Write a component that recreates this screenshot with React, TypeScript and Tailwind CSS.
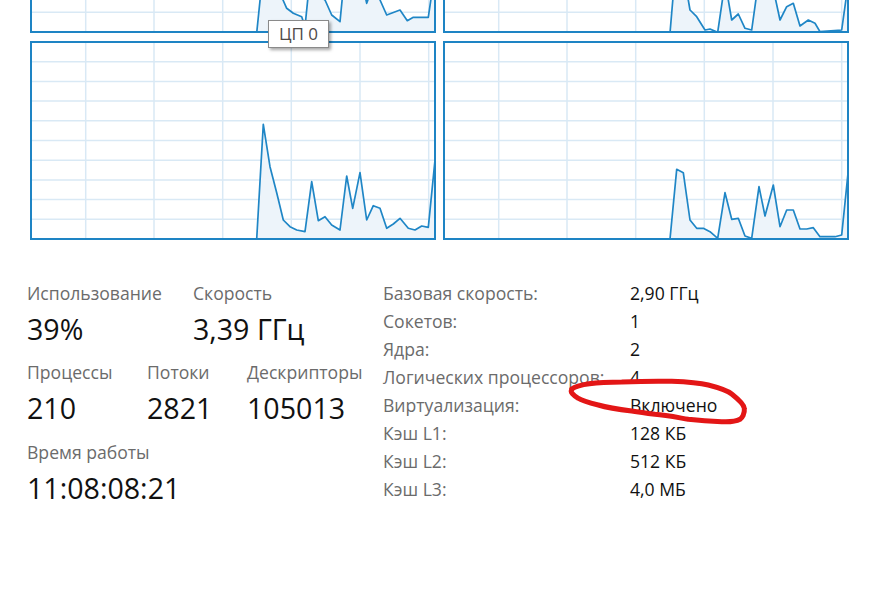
import React from 'react';

type Pt = [number, number];

// graph box geometry (outer, px)
const W = 406;
const H = 199;

const topLeft: Pt[] = [
  [0, 233], [226.7, 199], [231.7, 150], [237, 140], [243, 160], [250, 150], [253, 166],
  [256.7, 174.3], [263.3, 179.3], [271.7, 182.7], [275, 192.7], [278.3, 160], [283, 140], [289, 162], [295, 166],
  [301.7, 181], [310, 187.7], [312.7, 160], [317, 145], [323, 156], [330, 140], [336.7, 169.3], [340, 160],
  [344, 150], [350, 166], [356.7, 181], [370, 176], [377.3, 186.7], [383.3, 183.3], [398.3, 183.3], [401.7, 160], [406, 150],
];

const topRight: Pt[] = [
  [227, 199], [230.3, 160], [236, 145], [242, 160], [245.3, 166], [247, 176], [253.7, 182.7], [262, 196],
  [267, 195], [274.7, 198.3], [280.3, 160], [283, 150], [285.3, 166], [288.7, 186], [295.3, 180], [302, 194.3],
  [308.7, 196], [313.7, 160], [320, 150], [326, 158], [332.7, 166], [337, 186], [343.7, 172.7], [350.3, 169.3],
  [357, 192], [365.3, 186], [372, 189.3], [377, 197.7], [398.7, 196], [403.7, 160], [406, 150],
];

const botLeft: Pt[] = [
  [226.7, 198], [233.3, 83.3], [240, 125.7], [246.7, 151.7], [253.3, 179], [260, 185.7], [266.7, 189], [275, 190.7],
  [281.7, 140.7], [288.3, 179.7], [295, 175.7], [301.7, 184], [310, 189], [316.7, 135], [322.7, 167.3], [330, 131.7],
  [336.7, 179], [343.3, 164.7], [350, 167.3], [356.7, 187.3], [363.3, 183], [370, 177.3], [378.3, 187.3], [385, 189],
  [391.7, 185], [398.3, 186.3], [405, 119],
];

const botRight: Pt[] = [
  [227, 198], [233.7, 128.3], [240.3, 131.7], [247, 179], [253.7, 187.3], [260.3, 187.3], [267, 190.7], [274.7, 197.3],
  [282, 151.7], [288.7, 178.3], [295.3, 177.3], [302, 195], [308.7, 197.3], [316, 145.7], [322, 175], [330.3, 144],
  [337, 185.7], [343.7, 169], [350.3, 169], [357, 188], [363.7, 188], [370.3, 186.7], [377, 195.7], [385.3, 195.7],
  [392, 195.7], [398.7, 194], [405, 132.3],
];

function CpuGraph({ data, id }: { data: Pt[]; id: string }) {
  const line = data.map(([x, y]) => `${x},${y}`).join(' ');
  const first = data[0];
  const last = data[data.length - 1];
  const area = `${first[0]},${H - 1} ${line} ${last[0]},${H - 1}`;
  const vLines = [55.7, 124, 192.7, 261.3, 330, 398.7];
  const hLines = [1, 2, 3, 4, 5, 6, 7, 8, 9].map((i) => 1 + i * 19.7);

  return (
    <div className="w-[406px] h-[199px] overflow-hidden">
      <svg width={W} height={H} viewBox={`0 0 ${W} ${H}`}>
        <defs>
          <clipPath id={id}>
            <rect x={2} y={2} width={W - 4} height={H - 4} />
          </clipPath>
        </defs>
        <g clipPath={`url(#${id})`}>
          {hLines.map((y) => (
            <line key={y} x1={0} x2={W} y1={y} y2={y} stroke="#d9e9f5" strokeWidth={1.5} />
          ))}
          {vLines.map((x) => (
            <line key={x} x1={x} x2={x} y1={0} y2={H} stroke="#d9e9f5" strokeWidth={1.5} />
          ))}
          <polygon points={area} fill="#edf4fa" />
          <polyline points={line} fill="none" stroke="#1f86c6" strokeWidth={1.7} strokeLinejoin="round" />
        </g>
        <rect x={1} y={1} width={W - 2} height={H - 2} fill="none" stroke="#1e84c4" strokeWidth={2} />
      </svg>
    </div>
  );
}

const props = [
  { label: 'Базовая скорость:', value: '2,90 ГГц' },
  { label: 'Сокетов:', value: '1' },
  { label: 'Ядра:', value: '2' },
  { label: 'Логических процессоров:', value: '4' },
  { label: 'Виртуализация:', value: 'Включено' },
  { label: 'Кэш L1:', value: '128 КБ' },
  { label: 'Кэш L2:', value: '512 КБ' },
  { label: 'Кэш L3:', value: '4,0 МБ' },
];

function Stat({ label, value, w }: { label: string; value: string; w: string }) {
  return (
    <div className={w}>
      <div className="h-[28px] leading-[28px] text-[17.6px] text-[#6b6b6b] whitespace-nowrap">{label}</div>
      <div className="h-[44px] leading-[44px] text-[28.6px] text-[#111] whitespace-nowrap">{value}</div>
    </div>
  );
}

export default function App() {
  return (
    <div
      className="relative w-[885px] h-[613px] overflow-hidden bg-white"
      style={{ fontFamily: '"Open Sans", "Noto Sans", sans-serif' }}
    >
      <div className="-mt-[166px] pl-[30px] grid grid-cols-[406px_406px] gap-x-[7px] gap-y-[8px]">
        <CpuGraph data={topLeft} id="g-tl" />
        <CpuGraph data={topRight} id="g-tr" />
        <CpuGraph data={botLeft} id="g-bl" />
        <CpuGraph data={botRight} id="g-br" />
      </div>

      <div className="mt-[39px] flex">
        <div className="w-[383px] pl-[27px] flex flex-col">
          <div className="flex">
            <Stat label="Использование" value="39%" w="w-[166px]" />
            <Stat label="Скорость" value="3,39 ГГц" w="w-[160px]" />
          </div>
          <div className="flex mt-[7px]">
            <Stat label="Процессы" value="210" w="w-[120px]" />
            <Stat label="Потоки" value="2821" w="w-[100px]" />
            <Stat label="Дескрипторы" value="105013" w="w-[120px]" />
          </div>
          <div className="flex mt-[8px]">
            <Stat label="Время работы" value="11:08:08:21" w="w-[200px]" />
          </div>
        </div>

        <div className="flex flex-col">
          {props.map((p) => (
            <div key={p.label} className="flex h-[28px] leading-[28px] text-[17.6px] whitespace-nowrap">
              <span className="w-[247px] text-[#6b6b6b]">{p.label}</span>
              <span className="text-[#111]">{p.value}</span>
            </div>
          ))}
        </div>
      </div>

      {/* tooltip over the graph */}
      <div className="absolute left-[268px] top-[20px] w-[61px] h-[28px] bg-white border border-[#8a8a8a] shadow-[2px_2px_3px_rgba(0,0,0,0.35)] flex items-center justify-center text-[17px] text-[#4e4a48]">
        ЦП 0
      </div>

      {/* hand-drawn red marker */}
      <svg className="absolute left-0 top-0 pointer-events-none" width={885} height={613}>
        <path
          d="M571.7,389 C580,383 600,382 621.7,382 C645,381 660,381 671.7,381.3 C690,382 700,383 708.3,385 C720,388 728,391 731.7,394 C738,399 744,404 744.3,408.3 C745,414 742,418 740,419.3 C735,422 728,422 721.7,421.7 C705,421 695,420 688.3,419.3 C675,417 665,415 655,414.3 C645,413 638,412 631.7,411 C615,409 605,407 598.3,405 C590,403 582,401 578.3,398.3 C573,395 570,392 571.7,389.7"
          fill="none"
          stroke="#e31616"
          strokeWidth={5}
          strokeLinecap="round"
          strokeLinejoin="round"
        />
      </svg>
    </div>
  );
}
